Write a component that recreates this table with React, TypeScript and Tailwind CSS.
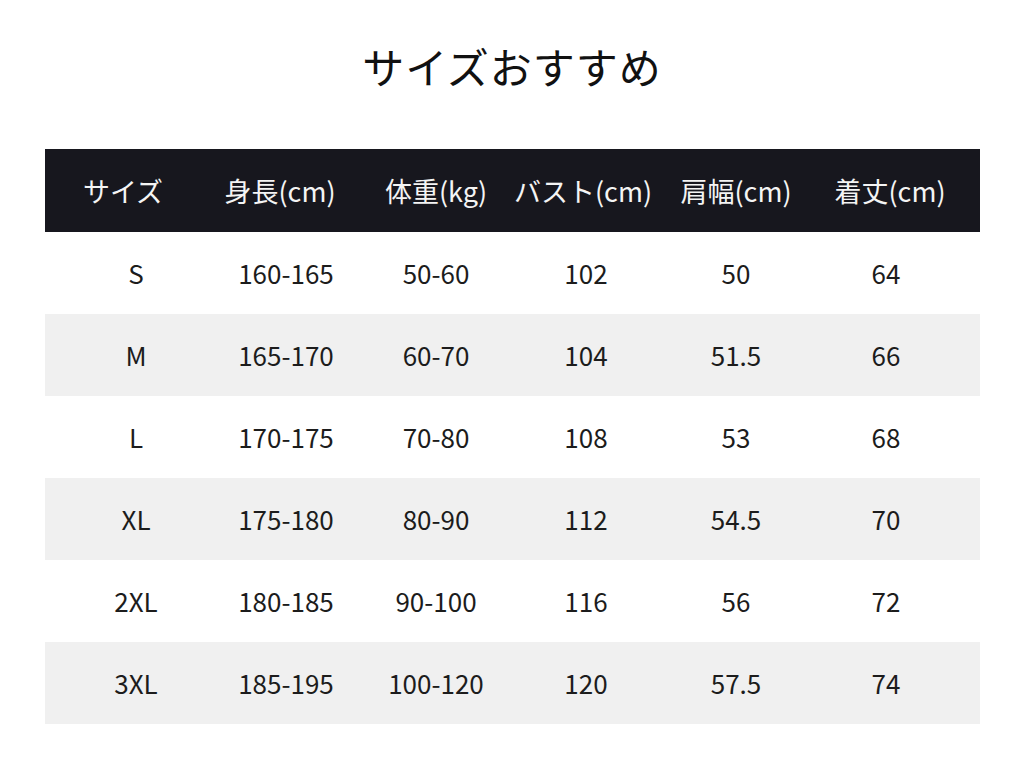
import React from "react";

const headers = [
  { t: "サイズ", cls: "mr-[26px]" },
  { t: "身長(cm)", cls: "mr-[12px]" },
  { t: "体重(kg)", cls: "" },
  { t: "バスト(cm)", cls: "mr-[6px]" },
  { t: "肩幅(cm)", cls: "" },
  { t: "着丈(cm)", cls: "ml-[8px]" },
];
const rows = [
  ["S", "160-165", "50-60", "102", "50", "64"],
  ["M", "165-170", "60-70", "104", "51.5", "66"],
  ["L", "170-175", "70-80", "108", "53", "68"],
  ["XL", "175-180", "80-90", "112", "54.5", "70"],
  ["2XL", "180-185", "90-100", "116", "56", "72"],
  ["3XL", "185-195", "100-120", "120", "57.5", "74"],
];

export default function App() {
  return (
    <div
      className="w-[1024px] h-[770px] bg-white overflow-hidden"
      style={{ fontFamily: '"Noto Sans CJK JP", "Noto Sans", sans-serif' }}
    >
      <div className="h-[149px] flex items-start justify-center pt-[36px]">
        <h1 className="text-[42px] leading-[60px] text-[#111] tracking-[1px]">サイズおすすめ</h1>
      </div>
      <div className="ml-[45px] w-[935px]">
        <div className="h-[83px] bg-[#17171e] pl-[16px] grid grid-cols-[repeat(6,150px)] items-center">
          {headers.map((h) => (
            <div
              key={h.t}
              className={`text-center text-[#f4f4f4] text-[27px] leading-none whitespace-nowrap ${h.cls}`}
            >
              {h.t}
            </div>
          ))}
        </div>
        {rows.map((r, i) => (
          <div
            key={r[0]}
            className={`h-[82px] pl-[16px] grid grid-cols-[repeat(6,150px)] items-center ${
              i % 2 === 1 ? "bg-[#f0f0f0]" : "bg-white"
            }`}
          >
            {r.map((c, j) => (
              <div key={j} className="text-center text-[#1c1c1c] text-[26px] leading-none">
                {c}
              </div>
            ))}
          </div>
        ))}
      </div>
    </div>
  );
}
